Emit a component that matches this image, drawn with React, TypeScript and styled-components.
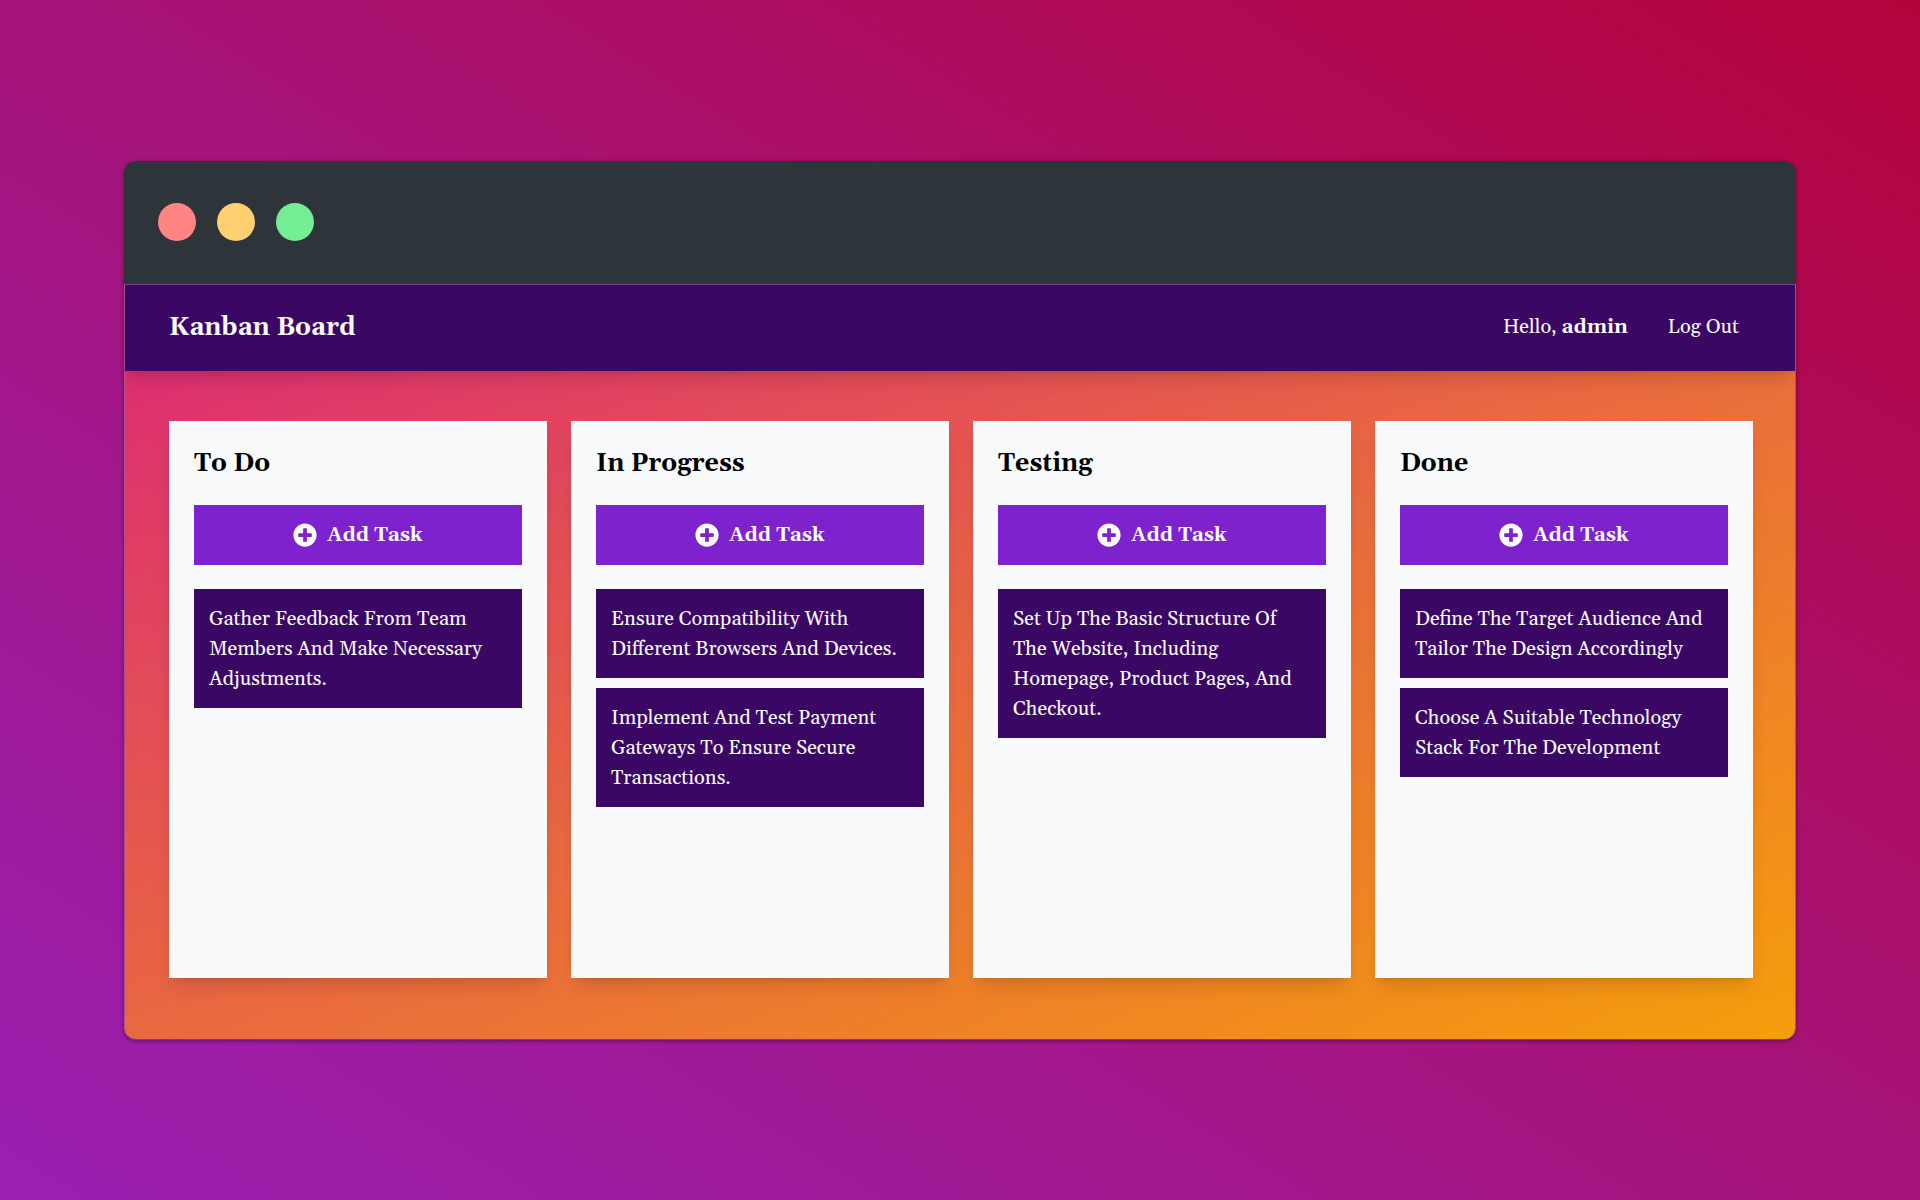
import React from "react";
import styled, { createGlobalStyle } from "styled-components";
import { FaPlusCircle } from "react-icons/fa";

const GlobalStyle = createGlobalStyle`
  *, *::before, *::after { box-sizing: border-box; }
  body { margin: 0; }
`;

const raised = "0 12px 18px -4px rgba(0, 0, 0, 0.12), 0 5px 7px -5px rgba(0, 0, 0, 0.12)";

const Page = styled.div`
  display: flex;
  flex-direction: column;
  justify-content: center;
  min-height: 100vh;
  padding: 40px 124px;
  font-family: Georgia, Gelasio, "Liberation Serif", serif;
  font-size: 20px;
  line-height: 30px;
  color: #f8fafc;
  background: linear-gradient(to top right, #9a20b2, #a6137a, #b5043c);
`;

const Window = styled.div`
  border-radius: 12px;
  overflow: hidden;
  box-shadow: 0 1px 4px rgba(0, 0, 0, 0.4);
`;

const TitleBar = styled.div`
  display: flex;
  align-items: center;
  gap: 21px;
  height: 123px;
  padding: 0 34px;
  background: #2d353b;
`;

const Dot = styled.span<{ $color: string }>`
  width: 38px;
  height: 38px;
  border-radius: 50%;
  background: ${(p) => p.$color};
`;

const Content = styled.div`
  border: 1px solid;
  border-color: #6b4484 #a8528a;
  border-radius: 0 0 12px 12px;
  background: linear-gradient(to bottom right, #db2777, #e96841, #f59e0b);
`;

const Header = styled.header`
  display: flex;
  align-items: center;
  justify-content: space-between;
  height: 86px;
  padding: 0 44px;
  background: #3b0764;
  box-shadow: ${raised};
`;

const Brand = styled.h1`
  margin: 0;
  font-size: 25px;
  line-height: 36px;
`;

const UserNav = styled.nav`
  display: flex;
  align-items: center;
  gap: 40px;
  padding: 0 12px 2px 0;
`;

const LogOut = styled.a`
  color: inherit;
  text-decoration: none;
`;

const Board = styled.main`
  display: grid;
  grid-template-columns: repeat(4, minmax(0, 1fr));
  gap: 24px;
  padding: 50px 42px 61px 44px;
`;

const Column = styled.section`
  min-height: 557px;
  padding: 25px;
  background: #f8fafc;
  box-shadow: ${raised};
`;

const ColumnTitle = styled.h2`
  margin: 0 0 23px;
  font-size: 25px;
  line-height: 36px;
  color: #000;
`;

const AddButton = styled.button`
  display: flex;
  align-items: center;
  justify-content: center;
  gap: 10px;
  width: 100%;
  height: 60px;
  padding: 0;
  border: 0;
  font: inherit;
  font-weight: 700;
  color: inherit;
  background: #7e22ce;
  cursor: pointer;
`;

const TaskList = styled.ul`
  display: flex;
  flex-direction: column;
  gap: 10px;
  margin: 24px 0 0;
  padding: 0;
  list-style: none;
`;

const Task = styled.li`
  padding: 15px 15px 14px;
  background: #3b0764;
`;

const columns = [
  { title: "To Do", tasks: ["Gather Feedback From Team Members And Make Necessary Adjustments."] },
  {
    title: "In Progress",
    tasks: [
      "Ensure Compatibility With Different Browsers And Devices.",
      "Implement And Test Payment Gateways To Ensure Secure Transactions.",
    ],
  },
  {
    title: "Testing",
    tasks: ["Set Up The Basic Structure Of The Website, Including Homepage, Product Pages, And Checkout."],
  },
  {
    title: "Done",
    tasks: [
      "Define The Target Audience And Tailor The Design Accordingly",
      "Choose A Suitable Technology Stack For The Development",
    ],
  },
];

export default function App() {
  return (
    <>
      <GlobalStyle />
      <Page>
        <Window>
          <TitleBar>
            <Dot $color="#ff8585" />
            <Dot $color="#ffd071" />
            <Dot $color="#74ed94" />
          </TitleBar>
          <Content>
            <Header>
              <Brand>Kanban Board</Brand>
              <UserNav>
                <span>
                  Hello, <strong>admin</strong>
                </span>
                <LogOut href="#">Log Out</LogOut>
              </UserNav>
            </Header>
            <Board>
              {columns.map((column) => (
                <Column key={column.title}>
                  <ColumnTitle>{column.title}</ColumnTitle>
                  <AddButton type="button">
                    <FaPlusCircle size={24} aria-hidden />
                    Add Task
                  </AddButton>
                  <TaskList>
                    {column.tasks.map((task) => (
                      <Task key={task}>{task}</Task>
                    ))}
                  </TaskList>
                </Column>
              ))}
            </Board>
          </Content>
        </Window>
      </Page>
    </>
  );
}
